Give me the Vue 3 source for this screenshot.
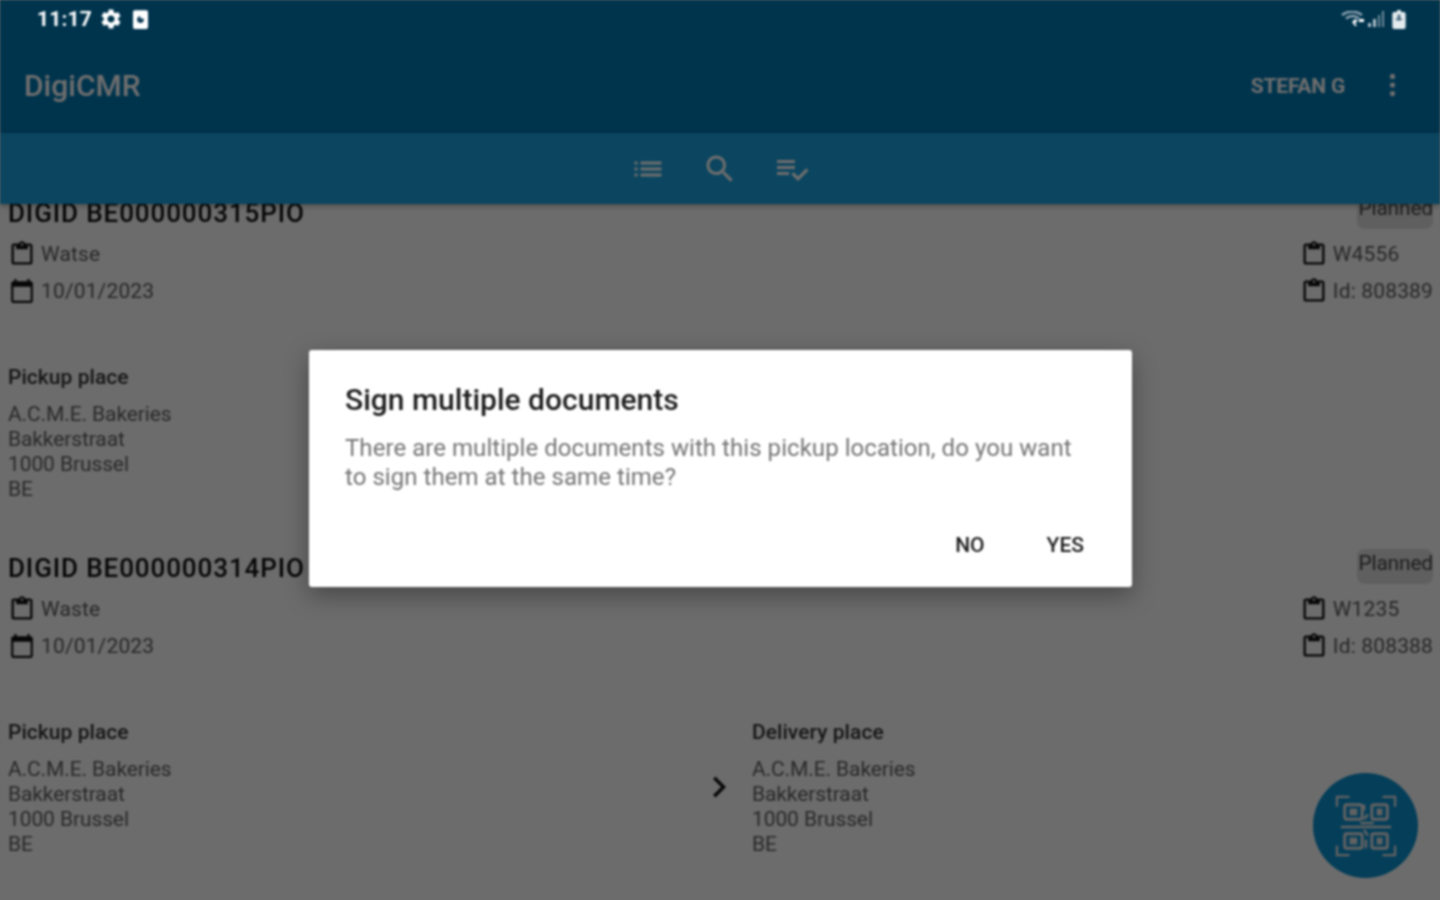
<script setup>
const icons = {
  clip: 'M19 3h-4.18C14.4 1.84 13.3 1 12 1c-1.3 0-2.4.84-2.82 2H5c-1.1 0-2 .9-2 2v14c0 1.1.9 2 2 2h14c1.1 0 2-.9 2-2V5c0-1.1-.9-2-2-2zm-7 0c.55 0 1 .45 1 1s-.45 1-1 1-1-.45-1-1 .45-1 1-1zm7 16H5V5h2v3h10V5h2v14z',
  cal: 'M20 3h-1V1h-2v2H7V1H5v2H4c-1.1 0-2 .9-2 2v16c0 1.1.9 2 2 2h16c1.1 0 2-.9 2-2V5c0-1.1-.9-2-2-2zm0 18H4V8h16v13z'
}
const address = ['A.C.M.E. Bakeries', 'Bakkerstraat', '1000 Brussel', 'BE']
const cards = [
  { title: 'DIGID BE000000315PIO', kind: 'Watse', date: '10/01/2023', code: 'W4556', id: 'Id: 808389', showDelivery: false },
  { title: 'DIGID BE000000314PIO', kind: 'Waste', date: '10/01/2023', code: 'W1235', id: 'Id: 808388', showDelivery: true }
]
</script>

<template>
  <div class="screen">
    <header class="appbar">
      <div class="toolbar">
        <span class="brand">DigiCMR</span>
        <div class="toolbar-end">
          <span class="user">STEFAN G</span>
          <svg class="more" viewBox="0 0 8 28"><circle cx="4" cy="4" r="3" /><circle cx="4" cy="14" r="3" /><circle cx="4" cy="24" r="3" /></svg>
        </div>
      </div>
    </header>

    <nav class="tabs">
      <button class="tab"><svg viewBox="0 0 24 24"><path d="M3 13h2v-2H3v2zm0 4h2v-2H3v2zm0-8h2V7H3v2zm4 4h14v-2H7v2zm0 4h14v-2H7v2zM7 7v2h14V7H7z"/></svg></button>
      <button class="tab"><svg viewBox="0 0 24 24"><path d="M15.5 14h-.79l-.28-.27C15.41 12.59 16 11.11 16 9.5 16 5.91 13.09 3 9.5 3S3 5.91 3 9.5 5.91 16 9.5 16c1.61 0 3.09-.59 4.23-1.57l.27.28v.79l5 4.99L20.49 19l-4.99-5zm-6 0C7.01 14 5 11.99 5 9.5S7.01 5 9.5 5 14 7.01 14 9.5 11.99 14 9.5 14z"/></svg></button>
      <button class="tab"><svg viewBox="0 0 24 24"><path d="M14 10H2v2h12v-2zm0-4H2v2h12V6zM2 16h8v-2H2v2zm19.5-4.5L23 13l-6.99 7-4.51-4.5L13 14l3.01 3 5.49-5.5z"/></svg></button>
    </nav>

    <main class="list">
      <article v-for="card in cards" :key="card.id" class="card">
        <div class="card-top">
          <div class="col">
            <h2 class="doc-title">{{ card.title }}</h2>
            <div class="meta"><svg viewBox="0 0 24 24"><path :d="icons.clip"/></svg><span class="meta-text">{{ card.kind }}</span></div>
            <div class="meta"><svg class="cal" viewBox="0 0 24 24"><path :d="icons.cal"/></svg><span class="meta-text">{{ card.date }}</span></div>
          </div>
          <div class="col col-end">
            <span class="chip">Planned</span>
            <div class="meta"><svg viewBox="0 0 24 24"><path :d="icons.clip"/></svg><span class="meta-text">{{ card.code }}</span></div>
            <div class="meta"><svg viewBox="0 0 24 24"><path :d="icons.clip"/></svg><span class="meta-text">{{ card.id }}</span></div>
          </div>
        </div>
        <div class="places">
          <div class="place">
            <h3 class="place-title">Pickup place</h3>
            <div v-for="l in address" :key="l" class="line">{{ l }}</div>
          </div>
          <template v-if="card.showDelivery">
            <svg class="chev" viewBox="0 0 24 24"><path d="M10 6L8.59 7.41 13.17 12l-4.58 4.59L10 18l6-6z"/></svg>
            <div class="place">
              <h3 class="place-title">Delivery place</h3>
              <div v-for="l in address" :key="l" class="line">{{ l }}</div>
            </div>
          </template>
        </div>
      </article>
    </main>

    <button class="fab">
      <svg viewBox="0 0 64 64" fill="none" stroke="#e4e4e4" stroke-width="2.4">
        <path d="M2 12V2h13M49 2h13v10M2 52v10h13M49 62h13V52"/>
        <rect x="10" y="10" width="18" height="15" rx="2" stroke-width="3"/>
        <rect x="15" y="14" width="8" height="7" fill="#e4e4e4" stroke="none"/>
        <rect x="38" y="10" width="16" height="15" rx="2" stroke-width="3"/>
        <rect x="43" y="14" width="6" height="7" fill="#e4e4e4" stroke="none"/>
        <rect x="10" y="40" width="18" height="15" rx="2" stroke-width="3"/>
        <rect x="15" y="44" width="8" height="7" fill="#e4e4e4" stroke="none"/>
        <rect x="38" y="40" width="16" height="15" rx="2" stroke-width="3"/>
        <rect x="43" y="44" width="6" height="7" fill="#e4e4e4" stroke="none"/>
        <path d="M6 33h52M30 10v6M34 20l-4 5M26 29h14M30 36l4 6M32 46v9" stroke-width="2.6"/>
      </svg>
    </button>

    <div class="scrim">
      <section class="dialog">
        <h1 class="dlg-title">Sign multiple documents</h1>
        <p class="dlg-body">There are multiple documents with this pickup location, do you want to sign them at the same time?</p>
        <div class="dlg-actions">
          <button class="dlg-btn">NO</button>
          <button class="dlg-btn">YES</button>
        </div>
      </section>
    </div>

    <div class="status">
      <div class="status-left">
        <span class="time">11:17</span>
        <svg class="st-gear" viewBox="0 0 24 24"><path fill="#fff" d="M19.14 12.94c.04-.3.06-.61.06-.94 0-.32-.02-.64-.07-.94l2.03-1.58a.49.49 0 00.12-.61l-1.92-3.32a.488.488 0 00-.59-.22l-2.39.96c-.5-.38-1.03-.7-1.62-.94l-.36-2.54a.484.484 0 00-.48-.41h-3.84c-.24 0-.43.17-.47.41l-.36 2.54c-.59.24-1.13.57-1.62.94l-2.39-.96c-.22-.08-.47 0-.59.22L2.74 8.87c-.12.21-.08.47.12.61l2.03 1.58c-.05.3-.09.63-.09.94s.02.64.07.94l-2.03 1.58a.49.49 0 00-.12.61l1.92 3.32c.12.22.37.29.59.22l2.39-.96c.5.38 1.03.7 1.62.94l.36 2.54c.05.24.24.41.48.41h3.84c.24 0 .44-.17.47-.41l.36-2.54c.59-.24 1.13-.56 1.62-.94l2.39.96c.22.08.47 0 .59-.22l1.92-3.32c.12-.22.07-.47-.12-.61l-2.01-1.58zM12 15.6c-1.98 0-3.6-1.62-3.6-3.6s1.62-3.6 3.6-3.6 3.6 1.62 3.6 3.6-1.62 3.6-3.6 3.6z"/></svg>
        <svg class="st-phone" viewBox="0 0 16 20"><rect x="0" y="0" width="16" height="20" rx="2" fill="#fff"/><circle cx="8" cy="10" r="3.6" fill="#0c3a55"/><rect x="8" y="5" width="4" height="4" fill="#fff"/></svg>
      </div>
      <div class="status-right">
        <svg class="st-wifi" viewBox="0 0 24 16"><path fill="none" stroke="#8fa5b3" stroke-width="2.4" d="M1 4c6-4.5 14-4.5 20 0M5 7.5c4-3 9-3 13 0"/><path fill="#fff" d="M11 11l3-3 3 2-3 2 2 3h-2zM18 8h5v3h-5z"/></svg>
        <svg class="st-signal" viewBox="0 0 16 16"><path fill="#a9bac5" d="M0 12h3v4H0zM5 8h3v8H5z"/><path fill="#6f8a9b" d="M10 4h2v12h-2zM14 0h2v16h-2z"/></svg>
        <svg class="st-batt" viewBox="0 0 14 20"><path fill="#e4ebef" d="M5 0h4v2h3a2 2 0 012 2v14a2 2 0 01-2 2H2a2 2 0 01-2-2V4a2 2 0 012-2h3z"/><path fill="#47687c" d="M5 5h4l-1 3 3 2-3 1H5l-2-1 3-2z"/></svg>
      </div>
    </div>
  </div>
</template>

<style>
html, body { margin: 0; background: #6b6b6b; }
</style>

<style scoped>
.screen {
  position: relative;
  width: 1440px;
  height: 900px;
  overflow: hidden;
  display: flex;
  flex-direction: column;
  background: #fafafa;
  font-family: Roboto, "Liberation Sans", sans-serif;
  filter: blur(0.8px);
}
.appbar {
  flex: 0 0 133px;
  box-sizing: border-box;
  padding-top: 38px;
  background: #0078b2;
  color: #fff;
  display: flex;
  flex-direction: column;
  position: relative;
  z-index: 2;
}
.status {
  position: absolute;
  top: 0;
  left: 0;
  right: 0;
  z-index: 6;
  height: 38px;
  display: flex;
  align-items: center;
  justify-content: space-between;
  padding: 0 34px 0 37px;
}
.status-left, .status-right { display: flex; align-items: center; }
.time { font-size: 21px; font-weight: 700; color: #fff; letter-spacing: .2px; width: 56px; }
.st-gear { width: 24px; height: 24px; margin-left: 6px; }
.st-phone { width: 15px; height: 19px; margin-left: 10px; }
.st-wifi { width: 24px; height: 16px; }
.st-signal { width: 16px; height: 16px; margin-left: 3px; }
.st-batt { width: 14px; height: 19px; margin-left: 8px; }
.toolbar {
  flex: 1;
  display: flex;
  align-items: center;
  justify-content: space-between;
  padding: 0 44px 0 24px;
}
.brand { font-size: 30px; font-weight: 500; }
.toolbar-end { display: flex; align-items: center; gap: 44px; }
.user { font-size: 21px; font-weight: 700; letter-spacing: -.2px; }
.more { width: 7px; height: 24px; margin-bottom: 2px; fill: #fff; }
.tabs {
  flex: 0 0 71px;
  background: #1aa0dc;
  display: flex;
  justify-content: center;
  align-items: center;
  gap: 36px;
  position: relative;
  z-index: 2;
  box-shadow: 0 2px 5px rgba(0, 0, 0, .3);
}
.tab {
  width: 36px;
  height: 36px;
  padding: 0;
  border: 0;
  background: none;
  display: flex;
}
.tab svg { width: 36px; height: 36px; fill: #fff; }
.list {
  flex: 1;
  margin-top: -24px;
  display: flex;
  flex-direction: column;
}
.card {
  flex: 0 0 355px;
  box-sizing: border-box;
  padding: 18px 7px 0 8px;
}
.card-top { display: flex; justify-content: space-between; }
.col { display: flex; flex-direction: column; }
.col-end { align-items: flex-start; }
.doc-title {
  margin: 0;
  font-size: 26px;
  line-height: 30px;
  height: 30px;
  font-weight: 500;
  letter-spacing: .9px;
  color: #101010;
}
.chip {
  align-self: flex-end;
  box-sizing: border-box;
  width: 76px;
  height: 35px;
  margin-top: -4px;
  margin-bottom: 6px;
  line-height: 28px;
  font-size: 21px;
  background: #ddd;
  border-radius: 8px;
  color: #444;
  text-align: right;
  letter-spacing: -.2px;
}
.meta { display: flex; align-items: center; height: 37px; }
.doc-title + .meta { margin-top: 7px; }
.meta svg { width: 28px; height: 28px; fill: #111; flex: none; }
.meta svg.cal { width: 26px; height: 26px; margin: 0 1px; }
.meta-text { font-size: 21px; color: #5c5c5c; margin-left: 5px; letter-spacing: .15px; }
.places {
  display: flex;
  margin-top: 56px;
}
.place { width: 690px; flex: none; }
.place-title {
  margin: 0 0 12px;
  font-size: 21px;
  line-height: 25px;
  font-weight: 500;
  letter-spacing: .05px;
  color: #333;
}
.line { font-size: 21px; line-height: 25px; color: #5f5f5f; letter-spacing: -.1px; white-space: nowrap; }
.chev { width: 42px; height: 42px; fill: #111; margin: 45.5px 12px 0 0; flex: none; }
.fab {
  position: absolute;
  left: 1313px;
  top: 773px;
  width: 105px;
  height: 105px;
  padding: 0;
  box-sizing: border-box;
  border: 0;
  border-radius: 50%;
  background: #0a8fce;
  display: flex;
  align-items: center;
  justify-content: center;
}
.fab svg { width: 62px; height: 62px; }
.scrim {
  position: absolute;
  inset: 0;
  z-index: 5;
  background: rgba(0, 0, 0, .57);
}
.dialog {
  position: absolute;
  left: 309px;
  top: 350px;
  width: 823px;
  height: 237px;
  box-sizing: border-box;
  background: #fff;
  border-radius: 3px;
  padding: 32px 36px 0;
  box-shadow: 0 8px 24px rgba(0, 0, 0, .35);
  display: flex;
  flex-direction: column;
}
.dlg-title {
  margin: 0;
  font-size: 30px;
  line-height: 36px;
  font-weight: 500;
  color: #1e1e1e;
}
.dlg-body {
  margin: 16px 0 0;
  max-width: 735px;
  font-size: 24px;
  line-height: 29px;
  letter-spacing: .05px;
  color: #757575;
}
.dlg-actions {
  margin-top: auto;
  margin-bottom: 12px;
  display: flex;
  justify-content: flex-end;
  gap: 38px;
}
.dlg-btn {
  border: 0;
  background: none;
  padding: 0 12px;
  height: 60px;
  font: 500 21px Roboto, "Liberation Sans", sans-serif;
  letter-spacing: 0;
  color: #1b1b1b;
}
</style>
